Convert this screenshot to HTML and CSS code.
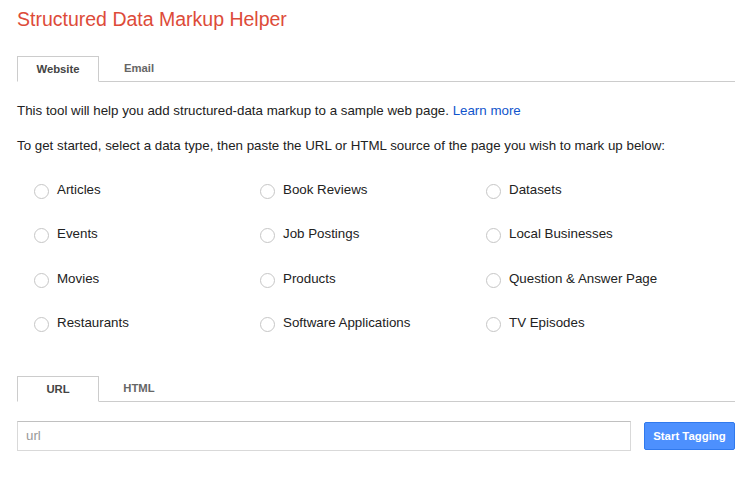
FILE: index.html
```html
<!DOCTYPE html>
<html>

<head>
    <link rel="stylesheet" href="styles.css">
</head>

<body>
    <h1 class="title">Structured Data Markup Helper</h1>

    <div class="tabs">
        <div class="tab active">Website</div>
        <div class="tab">Email</div>
    </div>

    <p class="intro">This tool will help you add structured-data markup to a sample web page. <a href="#">Learn more</a></p>
    <p class="intro">To get started, select a data type, then paste the URL or HTML source of the page you wish to mark up below:</p>

    <div class="types">
        <label class="type"><span class="radio"></span>Articles</label>
        <label class="type"><span class="radio"></span>Book Reviews</label>
        <label class="type"><span class="radio"></span>Datasets</label>
        <label class="type"><span class="radio"></span>Events</label>
        <label class="type"><span class="radio"></span>Job Postings</label>
        <label class="type"><span class="radio"></span>Local Businesses</label>
        <label class="type"><span class="radio"></span>Movies</label>
        <label class="type"><span class="radio"></span>Products</label>
        <label class="type"><span class="radio"></span>Question &amp; Answer Page</label>
        <label class="type"><span class="radio"></span>Restaurants</label>
        <label class="type"><span class="radio"></span>Software Applications</label>
        <label class="type"><span class="radio"></span>TV Episodes</label>
    </div>

    <div class="tabs source-tabs">
        <div class="tab active">URL</div>
        <div class="tab">HTML</div>
    </div>

    <div class="url-row">
        <input class="url-input" type="text" placeholder="url">
        <button class="start-btn">Start Tagging</button>
    </div>
</body>

</html>
```

FILE: styles.css
```css
body {
    font-family: "Liberation Sans", Arial, sans-serif;
    margin: 0;
    padding: 0 17px;
    color: #222;
    background: #fff;
}

.title {
    color: #dd4b39;
    font-size: 19.5px;
    font-weight: normal;
    margin: 0;
    padding-top: 7px;
    line-height: 24px;
}

.tabs {
    display: flex;
    border-bottom: 1px solid #ccc;
    margin-top: 25px;
    height: 25px;
}

.tab {
    width: 80px;
    height: 25px;
    line-height: 25px;
    text-align: center;
    font-size: 11.3px;
    font-weight: bold;
    color: #666;
}

.tab.active {
    border: 1px solid #ccc;
    border-bottom: 1px solid #fff;
    background: #fff;
    color: #444;
    height: 24px;
}

.intro {
    font-size: 13.33px;
    margin: 0;
    margin-top: 20px;
    line-height: 17px;
}

.intro + .intro {
    margin-top: 18px;
}

.intro a {
    color: #15c;
    text-decoration: none;
}

.types {
    display: grid;
    grid-template-columns: 226px 226px 226px;
    row-gap: 27.3px;
    margin-top: 27px;
    padding-left: 17px;
}

.type {
    display: flex;
    align-items: center;
    height: 17px;
    font-size: 13.33px;
    line-height: 17px;
    color: #222;
}

.radio {
    width: 13px;
    height: 13px;
    border: 1px solid #c6c6c6;
    border-radius: 50%;
    margin: 3px 8px -1px 0;
}

.source-tabs {
    margin-top: 45px;
}

.url-row {
    display: flex;
    align-items: center;
    margin-top: 19px;
}

.url-input {
    width: 614px;
    height: 30px;
    box-sizing: border-box;
    border: 1px solid #d9d9d9;
    border-top-color: #c0c0c0;
    padding: 0 8px;
    font-family: inherit;
    font-size: 13.33px;
    margin: 0;
}

.url-input::placeholder {
    color: #999;
}

.start-btn {
    margin-left: 13px;
    width: 91px;
    height: 28px;
    background-color: #4d90fe;
    border: 1px solid #3079ed;
    border-radius: 2px;
    color: #fff;
    font-family: inherit;
    font-size: 11.4px;
    font-weight: bold;
    cursor: pointer;
    padding: 0;
}
```
